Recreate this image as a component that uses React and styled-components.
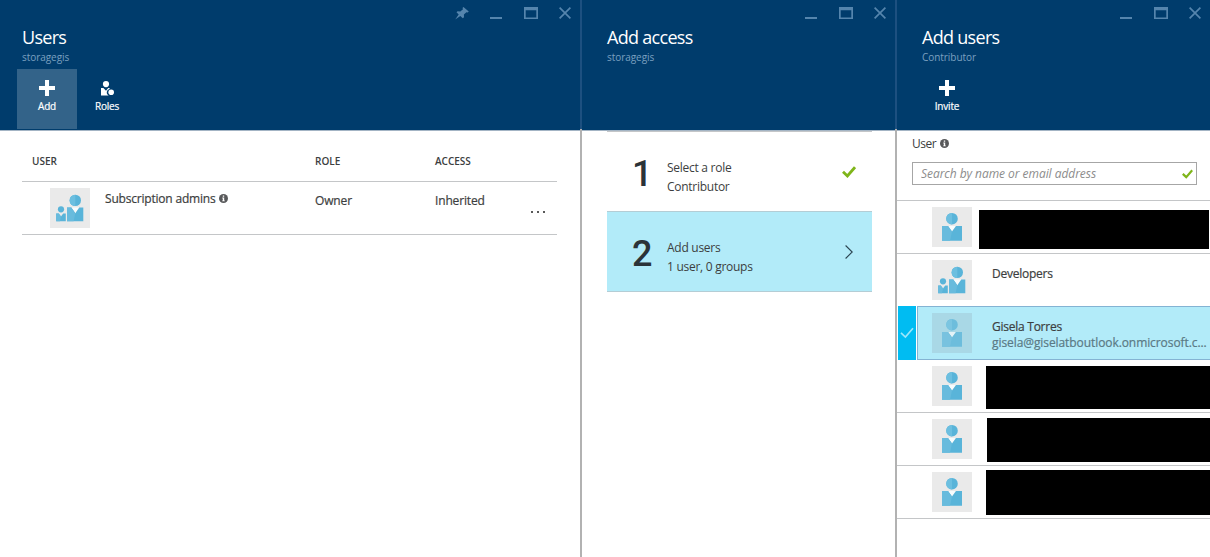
import React from 'react'
import styled, { createGlobalStyle, css } from 'styled-components'

const colors = {
  navy: '#003c6c',
  navyLight: '#1d5080',
  control: '#5585ad',
  divider: '#b2b2b2',
  line: '#c4c6c8',
  selected: '#b2ebf9',
  accent: '#00bcf2',
  green: '#7fb51a',
  text: '#3c3e40'
}

const people = [
  { id: 1, redact: { left: 7, top: 9, width: 230, height: 39 } },
  { id: 2, group: true, name: 'Developers' },
  {
    id: 3,
    selected: true,
    name: 'Gisela Torres',
    email: 'gisela@giselatboutlook.onmicrosoft.c...'
  },
  { id: 4, redact: { left: 14, top: 6, width: 224, height: 43 } },
  { id: 5, redact: { left: 15, top: 5, width: 223, height: 44 } },
  { id: 6, redact: { left: 14, top: 4, width: 224, height: 45 } }
]

function PinIcon () {
  return (
    <svg width='14' height='13' viewBox='0 0 14 13' fill='currentColor'>
      <path d='M8.4 0L13.8 4.5L12.6 5.6L11.4 5.2L8.9 7.6L9 10.2L7.8 11.3L5.3 8.9L0.2 12.6L3.7 7.4L1.5 5.3L2.6 4.3L5.3 4.5L8 2.3L7.5 1Z' />
    </svg>
  )
}

function MinimizeIcon () {
  return (
    <svg width='12' height='12' viewBox='0 0 12 12' fill='currentColor'>
      <path d='M0 10H12V12H0Z' />
    </svg>
  )
}

function MaximizeIcon () {
  return (
    <svg width='14' height='12' viewBox='0 0 14 12' fill='currentColor'>
      <path fillRule='evenodd' d='M0 0H14V12H0Z M1.7 3.2V10.4H12.3V3.2Z' />
    </svg>
  )
}

function CloseIcon () {
  return (
    <svg width='12' height='12' viewBox='0 0 12 12' stroke='currentColor'>
      <path d='M0.6 0.6L11.4 11.4M11.4 0.6L0.6 11.4' strokeWidth='1.7' />
    </svg>
  )
}

function PlusIcon () {
  return (
    <svg width='16' height='16' viewBox='0 0 16 16' fill='currentColor'>
      <path d='M6 0H10V6H16V10H10V16H6V10H0V6H6Z' />
    </svg>
  )
}

function RolesIcon () {
  return (
    <svg width='16' height='16' viewBox='0 0 16 16' fill='currentColor'>
      <circle cx='7' cy='4.1' r='3.1' />
      <path d='M2 8H4.4L7 10.8L9.2 8H10.6V8.9A3.6 3.6 0 0 0 9.6 15.6H2Z' />
      <circle cx='12.2' cy='12.2' r='2.8' />
    </svg>
  )
}

function InfoIcon () {
  return (
    <svg width='9' height='9' viewBox='0 0 9 9'>
      <circle cx='4.5' cy='4.5' r='4.5' fill='#58595b' />
      <path d='M3.8 1.5H5.2V2.8H3.8ZM3.3 3.6H5.2V6.5H5.8V7.3H3.2V6.5H3.8V4.4H3.3Z' fill='#fff' />
    </svg>
  )
}

function CheckIcon ({ width, height, stroke = 2.8 }) {
  return (
    <svg width={width} height={height} viewBox='0 0 14 12' fill='none'>
      <path d='M1 5.8L5.4 10L13 1.2' stroke='currentColor' strokeWidth={stroke} />
    </svg>
  )
}

function ChevronIcon () {
  return (
    <svg width='8' height='14' viewBox='0 0 8 14' fill='none'>
      <path d='M0.6 0.5L7.2 7L0.6 13.5' stroke='#2a4350' strokeWidth='1.1' />
    </svg>
  )
}

function PersonIcon ({ group }) {
  if (group) {
    return (
      <svg width='40' height='40' viewBox='0 0 40 40'>
        <circle cx='25.3' cy='12.4' r='5.7' fill='#59b4d9' />
        <path d='M25.3 6.7A5.7 5.7 0 0 0 25.3 18.1Z' fill='#6cbfe0' />
        <path d='M21.3 19.6H29.3L25.3 25.2Z' fill='#f8fcfd' />
        <path d='M17 19.6H21.3L25.3 25.2L29.3 19.6H33.3V33.2H17Z' fill='#59b4d9' />
        <path d='M17 19.6H21.3L25.3 25.2L23.6 33.2H17Z' fill='#68bbdd' />
        <circle cx='11' cy='21.3' r='3.1' fill='#59b4d9' />
        <path d='M6.2 25.4H8.8L11 28.4L13.2 25.4H15.8V33.2H6.2Z' fill='#59b4d9' />
        <path d='M6.2 25.4H8.8L11 28.4L10 33.2H6.2Z' fill='#68bbdd' />
      </svg>
    )
  }

  return (
    <svg width='40' height='40' viewBox='0 0 40 40'>
      <circle cx='20' cy='11.7' r='5.8' fill='#59b4d9' />
      <path d='M20 5.9A5.8 5.8 0 0 0 20 17.5Z' fill='#6cbfe0' />
      <path d='M16 19H24L20 24.4Z' fill='#f8fcfd' />
      <path d='M10 19H16L20 24.4L24 19H30V33.8H10Z' fill='#59b4d9' />
      <path d='M10 19H16L20 24.4L18 33.8H10Z' fill='#68bbdd' />
    </svg>
  )
}

function BladeHeader ({ title, subtitle, pinned, children }) {
  return (
    <Header>
      <Controls>
        {pinned ? <PinIcon /> : null}
        <MinimizeIcon />
        <MaximizeIcon />
        <CloseIcon />
      </Controls>
      <Title>{title}</Title>
      <Subtitle>{subtitle}</Subtitle>
      <Commands>{children}</Commands>
    </Header>
  )
}

function UsersBlade () {
  return (
    <Blade $width={582}>
      <BladeHeader title='Users' subtitle='storagegis' pinned>
        <Command $active>
          <PlusIcon />
          Add
        </Command>
        <Command>
          <RolesIcon />
          Roles
        </Command>
      </BladeHeader>
      <Table>
        <TableHead>
          <span>USER</span>
          <span>ROLE</span>
          <span>ACCESS</span>
        </TableHead>
        <TableRow>
          <UserCell>
            <Avatar>
              <PersonIcon group />
            </Avatar>
            <UserName>
              Subscription admins <InfoIcon />
            </UserName>
          </UserCell>
          <Cell>Owner</Cell>
          <Cell>Inherited</Cell>
          <More>
            <i />
            <i />
            <i />
          </More>
        </TableRow>
      </Table>
    </Blade>
  )
}

function AddAccessBlade () {
  return (
    <Blade $width={315}>
      <BladeHeader title='Add access' subtitle='storagegis' />
      <Steps>
        <Step>
          <StepNumber>1</StepNumber>
          <StepText>
            Select a role
            <br />
            Contributor
          </StepText>
          <StepMark>
            <CheckIcon width={14} height={12} />
          </StepMark>
        </Step>
        <Step $selected>
          <StepNumber>2</StepNumber>
          <StepText>
            Add users
            <br />1 user, 0 groups
          </StepText>
          <StepMark>
            <ChevronIcon />
          </StepMark>
        </Step>
      </Steps>
    </Blade>
  )
}

function AddUsersBlade () {
  return (
    <Blade $width={313} $last>
      <BladeHeader title='Add users' subtitle='Contributor'>
        <Command>
          <PlusIcon />
          Invite
        </Command>
      </BladeHeader>
      <FieldLabel>
        User <InfoIcon />
      </FieldLabel>
      <SearchBox>
        <SearchInput placeholder='Search by name or email address' />
        <CheckIcon width={11} height={10} />
      </SearchBox>
      <PeopleList>
        {people.map((person) => (
          <Person key={person.id}>
            <PersonCheck $selected={person.selected}>
              {person.selected ? <CheckIcon width={14} height={12} stroke={1.7} /> : null}
            </PersonCheck>
            <PersonBody $selected={person.selected}>
              <Avatar $dim={person.selected}>
                <PersonIcon group={person.group} />
              </Avatar>
              {person.redact ? (
                <Redacted {...mapRedact(person.redact)} />
              ) : (
                <PersonText>
                  <PersonName>{person.name}</PersonName>
                  {person.email ? <PersonEmail>{person.email}</PersonEmail> : null}
                </PersonText>
              )}
            </PersonBody>
          </Person>
        ))}
      </PeopleList>
    </Blade>
  )
}

function mapRedact ({ left, top, width, height }) {
  return { $left: left, $top: top, $width: width, $height: height }
}

function App () {
  return (
    <>
      <GlobalStyle />
      <Portal>
        <UsersBlade />
        <AddAccessBlade />
        <AddUsersBlade />
      </Portal>
    </>
  )
}

const GlobalStyle = createGlobalStyle`
  * {
    box-sizing: border-box;
  }

  body {
    margin: 0;
    background: #fff;
    color: ${colors.text};
    font-family: 'Open Sans', 'Noto Sans', sans-serif;
    font-size: 12px;
  }

  svg {
    display: block;
    flex: none;
  }
`

const mediumText = css`
  -webkit-text-stroke: 0.2px currentColor;
`

const Portal = styled.div`
  display: flex;
  width: 1210px;
  height: 557px;
  overflow: hidden;
`

const Header = styled.header`
  height: 131px;
  background: ${colors.navy};
  border-bottom: 1px solid #a3b4c4;
`

const Blade = styled.section`
  flex: 0 0 ${(props) => props.$width}px;
  min-width: 0;
  border-right: ${(props) => (props.$last ? 0 : 2)}px solid ${colors.divider};

  ${(props) =>
    !props.$last &&
    css`
      border-image: linear-gradient(${colors.navyLight} 130px, ${colors.divider} 130px) 1;
    `}
`

const Controls = styled.div`
  display: flex;
  justify-content: flex-end;
  gap: 21.5px;
  height: 26px;
  padding: 7px 9px 0 0;
  color: ${colors.control};
`

const Title = styled.h1`
  height: 24px;
  margin: 0;
  padding-left: 25px;
  color: #fff;
  font-size: 18px;
  font-weight: 400;
  line-height: 23px;
  letter-spacing: -0.7px;

  ${Blade}:first-child & {
    padding-left: 22px;
  }
`

const Subtitle = styled.div`
  height: 19px;
  padding-left: 25px;
  color: #7ba0c0;
  font-size: 10px;
  line-height: 14px;
  letter-spacing: -0.05px;

  ${Blade}:first-child & {
    padding-left: 22px;
  }
`

const Commands = styled.div`
  display: flex;
  padding-left: 20px;

  ${Blade}:first-child & {
    padding-left: 17px;
  }
`

const Command = styled.div`
  display: flex;
  flex-direction: column;
  align-items: center;
  gap: 4px;
  width: 60px;
  height: 60px;
  padding-top: 11px;
  background: ${(props) => (props.$active ? '#336389' : 'transparent')};
  color: #fff;
  font-size: 10px;
  line-height: 13px;
  letter-spacing: -0.2px;
  ${mediumText}
`

const Table = styled.div`
  width: 535px;
  margin-left: 22px;
`

const TableHead = styled.div`
  display: grid;
  grid-template-columns: 283px 120px 1fr;
  height: 51px;
  padding: 23px 0 0 10px;
  border-bottom: 1px solid ${colors.line};
  font-size: 10px;
  font-weight: 600;
  line-height: 15px;
`

const TableRow = styled.div`
  display: grid;
  grid-template-columns: 293px 120px 1fr auto;
  height: 53px;
  border-bottom: 1px solid ${colors.line};
  ${mediumText}
`

const UserCell = styled.div`
  display: flex;
  gap: 15px;
  padding: 6px 0 0 28px;
`

const Avatar = styled.div`
  flex: none;
  width: 40px;
  height: 40px;
  background: #eaeaea;

  ${(props) =>
    props.$dim &&
    css`
      background: #a9d8e6;

      svg {
        opacity: 0.75;
      }
    `}
`

const UserName = styled.div`
  display: flex;
  align-items: center;
  gap: 4px;
  height: 21px;
  letter-spacing: -0.2px;
`

const Cell = styled.div`
  padding-top: 10px;
  line-height: 18px;
  letter-spacing: -0.15px;
`

const More = styled.div`
  display: flex;
  gap: 3.4px;
  padding: 29px 12px 0 0;

  i {
    width: 2.4px;
    height: 2.4px;
    border-radius: 50%;
    background: #222;
  }
`

const Steps = styled.div`
  width: 265px;
  margin-left: 25px;
  border-top: 1px solid ${colors.line};
`

const Step = styled.div`
  display: flex;
  height: 80px;
  padding-left: 25px;
  background: ${(props) => (props.$selected ? colors.selected : '#fff')};
  border-bottom: 1px solid #b4cdd5;
`

const StepNumber = styled.div`
  width: 35px;
  padding-top: 19px;
  color: #2b3338;
  font-family: Roboto, 'Open Sans', sans-serif;
  font-size: 36px;
  font-weight: 500;
  line-height: 46px;
  letter-spacing: -1px;
`

const StepText = styled.div`
  flex: 1;
  padding-top: 26px;
  line-height: 19px;
  letter-spacing: -0.27px;
`

const StepMark = styled.div`
  display: flex;
  justify-content: center;
  align-items: center;
  width: 46px;
  color: ${colors.green};
`

const FieldLabel = styled.label`
  display: flex;
  align-items: center;
  gap: 4px;
  height: 31px;
  padding: 0 0 6px 15px;
  letter-spacing: -0.5px;
`

const SearchBox = styled.div`
  display: flex;
  align-items: center;
  width: 285px;
  height: 23px;
  margin: 0 0 15px 15px;
  padding: 0 3px 0 8px;
  border: 1px solid #a6a6a6;
  color: ${colors.green};
`

const SearchInput = styled.input`
  flex: 1;
  min-width: 0;
  padding: 0;
  border: 0;
  outline: 0;
  background: none;
  font: italic 12px 'Open Sans', 'Noto Sans', sans-serif;
  letter-spacing: -0.05px;

  &::placeholder {
    color: #8c8c8c;
    opacity: 1;
  }
`

const PeopleList = styled.div`
  border-top: 1px solid ${colors.line};
`

const Person = styled.div`
  display: flex;
  height: 53px;
`

const PersonCheck = styled.div`
  display: flex;
  justify-content: center;
  align-items: center;
  flex: 0 0 20px;
  margin-top: ${(props) => (props.$selected ? -1 : 0)}px;
  border-bottom: 1px solid ${colors.line};

  ${(props) =>
    props.$selected &&
    css`
      border: solid #fff;
      border-width: 0 1px;
      background: ${colors.accent};
      color: #9be6fb;
    `}
`

const PersonBody = styled.div`
  display: flex;
  flex: 1;
  min-width: 0;
  padding: 6px 0 0 15px;
  border-bottom: 1px solid ${colors.line};

  ${(props) =>
    props.$selected &&
    css`
      margin-top: -1px;
      padding-left: 14px;
      border: 1px solid #84b3d3;
      border-right: 0;
      background: ${colors.selected};
    `}
`

const PersonText = styled.div`
  padding: 5px 0 0 20px;
  white-space: nowrap;
  ${mediumText}
`

const PersonName = styled.div`
  line-height: 17px;
  letter-spacing: -0.25px;
`

const PersonEmail = styled.div`
  color: #5a7984;
  line-height: 16px;
  letter-spacing: -0.08px;
`

const Redacted = styled.div`
  flex: none;
  width: ${(props) => props.$width}px;
  height: ${(props) => props.$height}px;
  margin-top: ${(props) => props.$top - 6}px;
  margin-left: ${(props) => props.$left}px;
  background: #000;
`

export default App
